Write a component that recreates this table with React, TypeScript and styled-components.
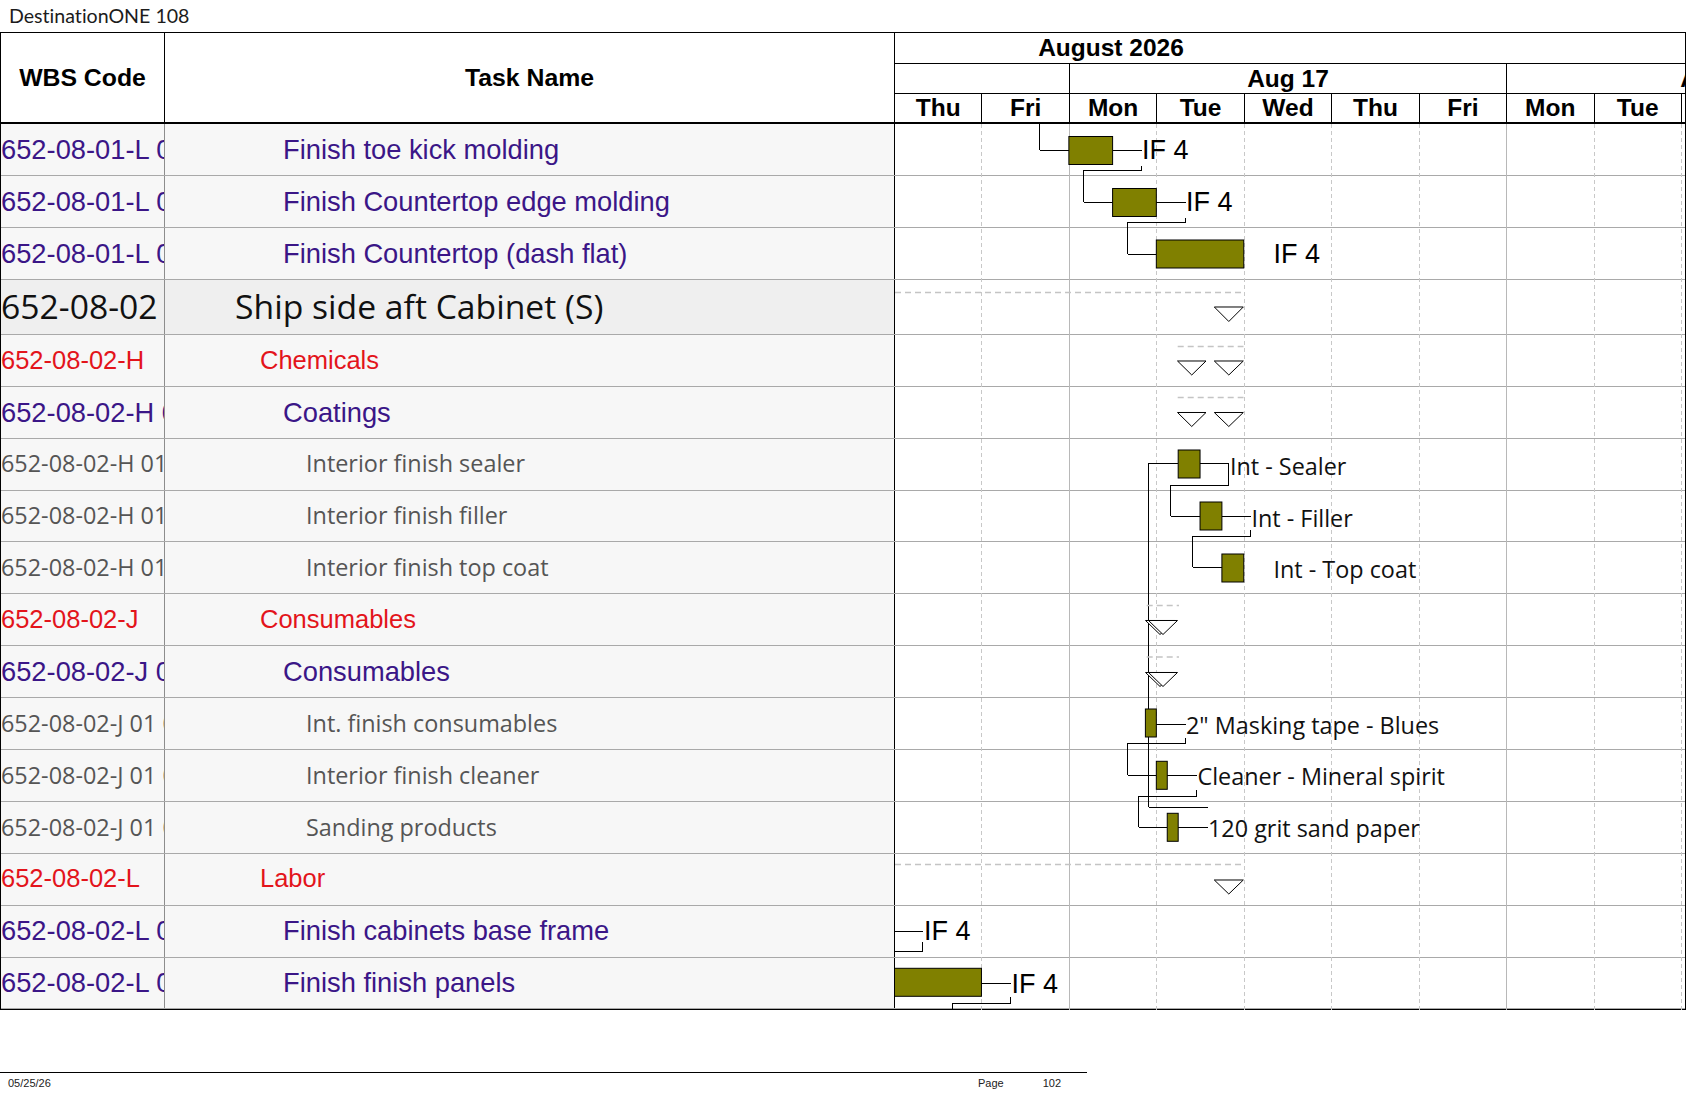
import React from "react";
import styled, { createGlobalStyle, css } from "styled-components";

const DW = 87.44;
const X0 = 894;
const X = (d: number) => X0 + d * DW;

const GlobalStyle = createGlobalStyle`
  html, body { margin: 0; padding: 0; background: #ffffff; }
  body { font-family: "Liberation Sans", Arial, sans-serif; color: #000; }
  * { box-sizing: border-box; }
`;

type Kind = "task" | "group" | "summary" | "item";

interface RowData {
  wbs: string;
  name: string;
  kind: Kind;
}

const rows: RowData[] = [
  { wbs: "652-08-01-L 01", name: "Finish toe kick molding", kind: "task" },
  { wbs: "652-08-01-L 02", name: "Finish Countertop edge molding", kind: "task" },
  { wbs: "652-08-01-L 03", name: "Finish Countertop (dash flat)", kind: "task" },
  { wbs: "652-08-02", name: "Ship side aft Cabinet (S)", kind: "summary" },
  { wbs: "652-08-02-H", name: "Chemicals", kind: "group" },
  { wbs: "652-08-02-H 01", name: "Coatings", kind: "task" },
  { wbs: "652-08-02-H 01 01", name: "Interior finish sealer", kind: "item" },
  { wbs: "652-08-02-H 01 02", name: "Interior finish filler", kind: "item" },
  { wbs: "652-08-02-H 01 03", name: "Interior finish top coat", kind: "item" },
  { wbs: "652-08-02-J", name: "Consumables", kind: "group" },
  { wbs: "652-08-02-J 01", name: "Consumables", kind: "task" },
  { wbs: "652-08-02-J 01 01", name: "Int. finish consumables", kind: "item" },
  { wbs: "652-08-02-J 01 02", name: "Interior finish cleaner", kind: "item" },
  { wbs: "652-08-02-J 01 03", name: "Sanding products", kind: "item" },
  { wbs: "652-08-02-L", name: "Labor", kind: "group" },
  { wbs: "652-08-02-L 01", name: "Finish cabinets base frame", kind: "task" },
  { wbs: "652-08-02-L 02", name: "Finish finish panels", kind: "task" },
];

const ROW_H = 51.9;
const SUM_H = 55.2;
const BODY_H = rows.reduce((s, r) => s + (r.kind === "summary" ? SUM_H : ROW_H), 0);

const kindFont: Record<Kind, ReturnType<typeof css>> = {
  task: css`
    font-family: "Liberation Sans", Arial, sans-serif;
    font-size: 27.3px;
    color: #3b1687;
  `,
  group: css`
    font-family: "Liberation Sans", Arial, sans-serif;
    font-size: 25.5px;
    color: #e3141b;
  `,
  summary: css`
    font-family: "Open Sans", "Noto Sans", sans-serif;
    font-size: 33.7px;
    color: #111111;
  `,
  item: css`
    font-family: "Open Sans", "Noto Sans", sans-serif;
    font-size: 23.4px;
    color: #555555;
  `,
};

const indent: Record<Kind, number> = { task: 118, group: 95, summary: 70, item: 141 };

const Page = styled.div`
  width: 1687px;
`;

const Title = styled.div`
  height: 32px;
  padding-left: 9px;
  padding-bottom: 1px;
  display: flex;
  align-items: center;
  font-family: Lato, "Open Sans", sans-serif;
  font-size: 19.6px;
  font-variant-ligatures: none;
  color: #1c1c1c;
`;

const Table = styled.div`
  width: 1686px;
  border: 1px solid #000;
`;

const Header = styled.div`
  display: grid;
  grid-template-columns: 164px 730px 1fr;
  height: 91px;
  border-bottom: 2px solid #000;
`;

const HeadCell = styled.div`
  display: flex;
  align-items: center;
  justify-content: center;
  border-right: 1px solid #000;
  font-family: "Liberation Sans", Arial, sans-serif;
  font-weight: 700;
  font-size: 24.8px;
`;

const GanttHead = styled.div`
  overflow: hidden;
  display: flex;
  flex-direction: column;
`;

const ScaleRow = styled.div<{ $h: number; $last?: boolean }>`
  height: ${(p) => p.$h}px;
  display: flex;
  flex: none;
  border-bottom: ${(p) => (p.$last ? "none" : "1px solid #000")};
  font-family: "Liberation Sans", Arial, sans-serif;
  font-weight: 700;
  font-size: 24.5px;
  white-space: nowrap;
`;

const ScaleCell = styled.div<{ $days: number; $edge?: boolean; $shift?: number }>`
  flex: none;
  width: ${(p) => p.$days * DW}px;
  display: flex;
  align-items: center;
  justify-content: center;
  padding-right: ${(p) => p.$shift ?? 0}px;
  border-right: ${(p) => (p.$edge ? "1px solid #000" : "none")};
`;

const Body = styled.div`
  position: relative;
`;

const Row = styled.div<{ $h: number }>`
  display: grid;
  grid-template-columns: 164px 730px 1fr;
  height: ${(p) => p.$h}px;
  border-bottom: 1px solid #a9a9a9;
  &:last-child {
    border-bottom: none;
  }
`;

const WbsCell = styled.div<{ $kind: Kind }>`
  display: flex;
  align-items: center;
  overflow: hidden;
  white-space: nowrap;
  line-height: 1;
  background: ${(p) => (p.$kind === "summary" ? "#efefef" : "#f7f7f7")};
  border-right: 1px solid #8d8d8d;
  ${(p) => kindFont[p.$kind]}
`;

const NameCell = styled.div<{ $kind: Kind }>`
  display: flex;
  align-items: center;
  overflow: hidden;
  white-space: nowrap;
  line-height: 1;
  padding-left: ${(p) => indent[p.$kind]}px;
  background: ${(p) => (p.$kind === "summary" ? "#efefef" : "#f7f7f7")};
  border-right: 1px solid #000;
  ${(p) => kindFont[p.$kind]}
`;

const GanttCell = styled.div`
  background: #ffffff;
`;

const Chart = styled.svg`
  position: absolute;
  top: 0;
  left: 894px;
  width: 790px;
  overflow: hidden;
  pointer-events: none;
`;

const Footer = styled.div`
  margin-top: 62px;
  width: 1087px;
  border-top: 1px solid #000;
  display: flex;
  padding: 4px 26px 0 8px;
  font-family: "Liberation Sans", Arial, sans-serif;
  font-size: 11px;
  line-height: 13px;
  color: #222;
`;

const FootRight = styled.div`
  margin-left: auto;
  display: flex;
  gap: 39px;
`;

const days = ["Thu", "Fri", "Mon", "Tue", "Wed", "Thu", "Fri", "Mon", "Tue", "Wed"];

const Bar: React.FC<{ a: number; b: number; y: number }> = ({ a, b, y }) => (
  <rect x={a} y={y} width={b - a} height={28} fill="#808000" stroke="#000" strokeWidth={1} />
);

const Link: React.FC<{ pts: string }> = ({ pts }) => (
  <polyline points={pts} fill="none" stroke="#000" strokeWidth={1} shapeRendering="crispEdges" />
);

const Tri: React.FC<{ l: number; t: number; w?: number; h?: number }> = ({ l, t, w = 29, h = 14 }) => (
  <polygon points={`${l},${t} ${l + w},${t} ${l + w / 2},${t + h}`} fill="#fff" stroke="#000" strokeWidth={1} />
);

const Dash: React.FC<{ a: number; b: number; y: number }> = ({ a, b, y }) => (
  <line x1={a} x2={b} y1={y} y2={y} stroke="#c4c4c4" strokeWidth={1.5} strokeDasharray="6 4" />
);

const IF: React.FC<{ x: number; y: number }> = ({ x, y }) => (
  <text x={x} y={y} fontFamily="'Liberation Sans', Arial, sans-serif" fontSize={27} fill="#000">
    IF 4
  </text>
);

const Lbl: React.FC<{ x: number; y: number; t: string }> = ({ x, y, t }) => (
  <text x={x} y={y} fontFamily="'Open Sans', 'Noto Sans', sans-serif" fontSize={23.4} fill="#111">
    {t}
  </text>
);

const GanttChart: React.FC = () => {
  const grid = [];
  for (let k = 1; k <= 9; k++) {
    const x = X(k) + 0.5;
    const week = k === 2 || k === 7;
    grid.push(
      <line
        key={k}
        x1={x}
        x2={x}
        y1={123}
        y2={123 + BODY_H}
        stroke={week ? "#b8b8b8" : "#c8c8c8"}
        strokeWidth={1}
        strokeDasharray={week ? undefined : "4 3"}
        shapeRendering="crispEdges"
      />
    );
  }
  return (
    <Chart height={BODY_H} viewBox={`895 123 790 ${BODY_H}`}>
      {grid}
      {/* Finish toe kick / countertop */}
      <Link pts="1039.5,123 1039.5,149.5 1068.9,149.5" />
      <Link pts="1112.6,149.5 1141.5,149.5" />
      <Link pts="1141.5,165 1141.5,169.5 1083.5,169.5 1083.5,201.5 1112.6,201.5" />
      <Link pts="1156.3,201.5 1185.5,201.5" />
      <Link pts="1185.5,217 1185.5,221.5 1127.5,221.5 1127.5,253.5 1156.3,253.5" />
      <Bar a={X(2)} b={X(2.5)} y={135.5} />
      <Bar a={X(2.5)} b={X(3)} y={187.5} />
      <Bar a={X(3)} b={X(4)} y={239} />
      <IF x={1142} y={158.5} />
      <IF x={1186} y={210.5} />
      <IF x={1273.5} y={262} />

      {/* Summary */}
      <Dash a={895} b={1243.5} y={291.5} />
      <Tri l={1214.3} t={306} h={14.5} />

      {/* Chemicals */}
      <Dash a={1177.7} b={1243.5} y={345.5} />
      <Tri l={1177.5} t={360} w={28.5} />
      <Tri l={1214.3} t={360} />

      {/* Coatings */}
      <Dash a={1177.7} b={1243.5} y={396.5} />
      <Tri l={1177.5} t={411.5} w={28.5} />
      <Tri l={1214.3} t={411.5} />

      {/* Interior finish */}
      <Link pts="1178.2,462.5 1148.5,462.5 1148.5,806.5 1207.5,806.5" />
      <Link pts="1200,462.5 1228.5,462.5 1228.5,484.5 1170.5,484.5 1170.5,515.5 1200,515.5" />
      <Link pts="1221.9,515.5 1250.5,515.5" />
      <Link pts="1250.5,529 1250.5,535.5 1192.5,535.5 1192.5,566.5 1221.9,566.5" />
      <Bar a={X(3.25)} b={X(3.5)} y={449} />
      <Bar a={X(3.5)} b={X(3.75)} y={501} />
      <Bar a={X(3.75)} b={X(4)} y={553} />
      <Lbl x={1230} y={474} t="Int - Sealer" />
      <Lbl x={1251.5} y={526} t="Int - Filler" />
      <Lbl x={1273.5} y={577} t="Int - Top coat" />

      {/* Consumables */}
      <Dash a={1146.7} b={1179} y={604.5} />
      <Tri l={1145.5} t={619.5} />
      <Tri l={1148.5} t={619.5} />
      <Dash a={1146.7} b={1179} y={656} />
      <Tri l={1145.5} t={671.5} />
      <Tri l={1148.5} t={671.5} />

      <Link pts="1156.3,723.5 1185.5,723.5" />
      <Link pts="1185.5,737 1185.5,742.5 1127.5,742.5 1127.5,774.5 1156.3,774.5" />
      <Link pts="1167.3,774.5 1196.5,774.5" />
      <Link pts="1196.5,789 1196.5,795.5 1138.5,795.5 1138.5,826.5 1167.3,826.5" />
      <Link pts="1178.2,826.5 1207.5,826.5" />
      <Bar a={X(2.875)} b={X(3)} y={708} />
      <Bar a={X(3)} b={X(3.125)} y={760.3} />
      <Bar a={X(3.125)} b={X(3.25)} y={812.3} />
      <Lbl x={1186} y={733.5} t={'2" Masking tape - Blues'} />
      <Lbl x={1197.5} y={784} t="Cleaner - Mineral spirit" />
      <Lbl x={1208} y={836.5} t="120 grit sand paper" />

      {/* Labor */}
      <Dash a={895} b={1243.5} y={863.5} />
      <Tri l={1214.3} t={879} />

      <Link pts="895,930.5 922.5,930.5" />
      <Link pts="922.5,941 922.5,950.5 895,950.5" />
      <IF x={924} y={939.5} />

      <Link pts="981.4,982.5 1010.5,982.5" />
      <Link pts="1010.5,996 1010.5,1002.5 952.5,1002.5 952.5,1012" />
      <Bar a={880} b={X(1)} y={967.3} />
      <IF x={1011.5} y={992} />
    </Chart>
  );
};

export default function App() {
  return (
    <Page>
      <GlobalStyle />
      <Title>DestinationONE 108</Title>
      <Table>
        <Header>
          <HeadCell>WBS Code</HeadCell>
          <HeadCell>Task Name</HeadCell>
          <GanttHead>
            <ScaleRow $h={31}>
              <ScaleCell $days={432 / DW}>August 2026</ScaleCell>
            </ScaleRow>
            <ScaleRow $h={30}>
              <ScaleCell $days={2} $edge />
              <ScaleCell $days={5} $edge>
                Aug 17
              </ScaleCell>
              <ScaleCell $days={5} $edge $shift={8}>
                Aug 24
              </ScaleCell>
            </ScaleRow>
            <ScaleRow $h={28} $last>
              {days.map((d, i) => (
                <ScaleCell key={i} $days={1} $edge>
                  {d}
                </ScaleCell>
              ))}
            </ScaleRow>
          </GanttHead>
        </Header>
        <Body>
          {rows.map((r, i) => (
            <Row key={i} $h={r.kind === "summary" ? SUM_H : ROW_H}>
              <WbsCell $kind={r.kind}>{r.wbs}</WbsCell>
              <NameCell $kind={r.kind}>{r.name}</NameCell>
              <GanttCell />
            </Row>
          ))}
          <GanttChart />
        </Body>
      </Table>
      <Footer>
        <span>05/25/26</span>
        <FootRight>
          <span>Page</span>
          <span>102</span>
        </FootRight>
      </Footer>
    </Page>
  );
}
